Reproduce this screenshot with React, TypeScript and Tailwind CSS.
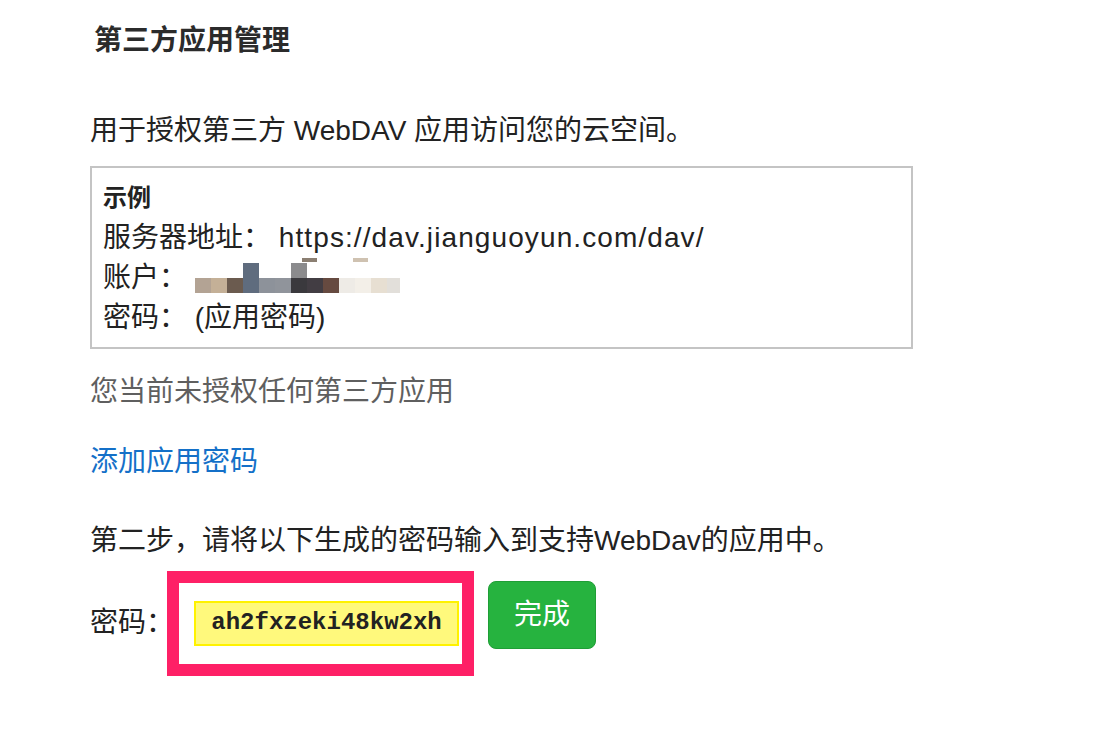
import React from 'react';

const sans = "[font-family:'Liberation_Sans','Noto_Sans_CJK_SC',sans-serif]";

// mosaic blocks that hide the account name
const blurMain = ['#b3a394', '#c4b097', '#6b5b4f', '#5f6c7e', '#8d929a', '#90949b', '#3a393d', '#423d43', '#664a40', '#eeebe6', '#f3efe8', '#e7dfd2', '#e2dfda'];

function BlurredAccount() {
  return (
    <svg width="206" height="40" viewBox="0 0 206 40" className="ml-[8px] shrink-0">
      {blurMain.map((c, i) => (
        <rect key={i} x={i * 16} y={20} width={i === 12 ? 13 : 16} height={15} fill={c} />
      ))}
      <rect x={48} y={5} width={16} height={15} fill="#5f6c7e" />
      <rect x={96} y={5} width={16} height={15} fill="#8b8b8d" />
      <rect x={107} y={0} width={15} height={4} fill="#8b7f72" />
      <rect x={158} y={0} width={15} height={4} fill="#cfc2b1" />
    </svg>
  );
}

export default function App() {
  return (
    <div className={`min-h-screen bg-white pl-[90px] pt-[21px] text-[28px] leading-[40px] text-[#222] ${sans}`}>
      <h1 className="pl-[4px] font-bold text-[#2b2b2b]">第三方应用管理</h1>

      <p className="mt-[50px]">用于授权第三方 WebDAV 应用访问您的云空间。</p>

      <div className="mt-[15px] w-[823px] border-2 border-[#c4c4c4] pl-[11px] pt-[10px] pb-[9px]">
        <div className="text-[24px] font-bold">示例</div>
        <div>
          服务器地址： <span className="tracking-[1.1px]">https://dav.jianguoyun.com/dav/</span>
        </div>
        <div className="flex items-center">
          <span>账户：</span>
          <BlurredAccount />
        </div>
        <div>密码： (应用密码)</div>
      </div>

      <p className="mt-[23px] text-[#5f5f5f]">您当前未授权任何第三方应用</p>

      <a className="mt-[30px] block text-[#1470c8] cursor-pointer">添加应用密码</a>

      <p className="mt-[39px]">第二步，请将以下生成的密码输入到支持WebDav的应用中。</p>

      <div className="mt-[20px] flex items-center">
        <span>密码：</span>
        <div className="relative ml-[20px]">
          <div className="flex h-[45px] w-[265px] items-center justify-center border-2 border-[#fff200] bg-[#fff97c] text-[24px] font-bold text-[#222] [font-family:'Liberation_Mono',monospace]">
            ah2fxzeki48kw2xh
          </div>
          <div className="pointer-events-none absolute -left-[27px] -right-[15px] -top-[30px] -bottom-[30px] border-[12px] border-[#fe2066]" />
        </div>
        <button className="mb-[16px] ml-[29px] flex h-[68px] w-[108px] items-center justify-center rounded-[8px] border border-[#1f9e36] bg-[#26b33f] text-[28px] text-white">
          完成
        </button>
      </div>
    </div>
  );
}
